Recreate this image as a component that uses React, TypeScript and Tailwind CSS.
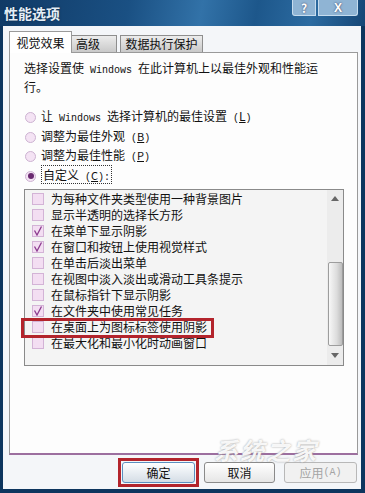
import React from 'react';

const CJK = '"Noto Sans CJK SC", "Liberation Sans", sans-serif';

// half-width latin, like the old bitmap system font
const L: React.FC<{ children: React.ReactNode }> = ({ children }) => (
  <span className="font-['Liberation_Mono',monospace] text-[10px] whitespace-pre">{children}</span>
);

interface RowProps {
  label: string;
  checked?: boolean;
}

const CheckRow: React.FC<RowProps> = ({ label, checked }) => (
  <div className="h-[16px] flex items-center pl-[7px] gap-[7px]">
    <span className="w-[12px] h-[12px] border border-[#d3b3d6] bg-[#f3def2] flex items-center justify-center shrink-0">
      {checked && (
        <svg width="10" height="10" viewBox="0 0 10 10">
          <path d="M1.5 4.5 L4 9 L8.5 0.5" fill="none" stroke="#8c3b8f" strokeWidth="1.3" />
        </svg>
      )}
    </span>
    <span className="text-[12px] leading-[16px] text-[#111]">{label}</span>
  </div>
);

const Radio: React.FC<{ label: React.ReactNode; selected?: boolean }> = ({ label, selected }) => (
  <div className="h-[19.5px] flex items-center pl-[16px] gap-[5px]">
    <span className="w-[11px] h-[11px] rounded-full border border-[#cdb3d2] bg-[#f4e3f4] flex items-center justify-center shrink-0">
      {selected && <span className="w-[6px] h-[6px] rounded-full bg-[#6a2a70]" />}
    </span>
    <span className="text-[12px] leading-[16px] text-[#111] whitespace-nowrap">{label}</span>
  </div>
);

const rows: RowProps[] = [
  { label: '为每种文件夹类型使用一种背景图片' },
  { label: '显示半透明的选择长方形' },
  { label: '在菜单下显示阴影', checked: true },
  { label: '在窗口和按钮上使用视觉样式', checked: true },
  { label: '在单击后淡出菜单' },
  { label: '在视图中淡入淡出或滑动工具条提示' },
  { label: '在鼠标指针下显示阴影' },
  { label: '在文件夹中使用常见任务', checked: true },
  { label: '在桌面上为图标标签使用阴影' },
  { label: '在最大化和最小化时动画窗口' },
];

export default function App() {
  return (
    <div
      className="w-[365px] h-[493px] bg-[#0d355e] flex flex-col overflow-hidden relative"
      style={{ fontFamily: CJK }}
    >
      {/* Title bar */}
      <div className="h-[26px] shrink-0 flex items-start justify-between bg-[linear-gradient(100deg,#103a66_0%,#1a5083_35%,#3272a8_55%,#1d578b_70%,#2c6ba1_85%,#154676_100%)]">
        <span className="mt-[5px] ml-[4px] text-[14px] leading-[16px] font-bold text-[#e4eef7] [text-shadow:0_0_2px_#0a2540]">性能选项</span>
        <div className="flex mr-[7px] gap-[2px]">
          <div className="w-[24px] h-[16px] bg-[#8fb4d4] border border-[#c6dcee] border-t-0 rounded-bl-[3px] flex items-center justify-center text-white text-[12px] font-bold leading-[14px] [text-shadow:0_0_2px_#335]">?</div>
          <div className="w-[40px] h-[16px] bg-[#8fb4d4] border border-[#c6dcee] border-t-0 rounded-br-[3px] flex items-center justify-center text-white text-[12px] font-bold leading-[14px] font-['Liberation_Sans',sans-serif] [text-shadow:0_0_2px_#335]">X</div>
        </div>
      </div>

      {/* Window body */}
      <div className="flex-1 ml-[3px] mr-[4px] mb-[4px] bg-[#f4f6f9] flex flex-col pl-[6px] pr-[3px]">
        {/* Tabs */}
        <div className="flex items-end h-[26px] pt-[6px] relative z-10">
          <div className="w-[63px] h-[22px] bg-white border border-[#9a9a9a] border-b-0 flex items-center justify-center text-[12px] text-[#111] mb-[-1px]">视觉效果</div>
          <div className="w-[45px] h-[17px] bg-[linear-gradient(#ececec,#c9c9c9)] border border-[#8e8e8e] border-b-0 border-l-0 flex items-center pl-[4px] text-[12px] text-[#111]">高级</div>
          <div className="w-[83px] h-[17px] ml-[3px] bg-[linear-gradient(#ececec,#c9c9c9)] border border-[#8e8e8e] border-b-0 flex items-center justify-center text-[12px] text-[#111]">数据执行保护</div>
        </div>

        {/* Panel */}
        <div className="h-[403px] bg-[#fdfdfd] border border-[#9a9a9a] border-b-[#9c6f9f] border-b-2 pl-[14px] pr-[14px] pt-[7px] flex flex-col">
          <p className="text-[12px] leading-[16px] text-[#111] whitespace-nowrap">
            选择设置使<L> Windows </L>在此计算机上以最佳外观和性能运
            <br />
            行。
          </p>

          <div className="mt-[13px] -ml-[15px]">
            <Radio label={<>让<L> Windows </L>选择计算机的最佳设置<L> (</L><span className="underline">L</span><L>)</L></>} />
            <Radio label={<>调整为最佳外观<L> (</L><span className="underline text-[11px]">B</span><L>)</L></>} />
            <Radio label={<>调整为最佳性能<L> (</L><span className="underline text-[11px]">P</span><L>)</L></>} />
            <Radio
              label={<span className="border border-dotted border-[#333] px-[1px]">自定义<L> (</L><span className="underline text-[11px]">C</span><L>):</L></span>}
              selected
            />
          </div>

          {/* List box */}
          <div className="mt-[3px] h-[177px] w-[320px] border border-[#8a8a8a] bg-[#f4f4f4] relative flex">
            <div className="flex-1 pt-[1px]">
              {rows.map((r) => (
                <CheckRow key={r.label} label={r.label} checked={r.checked} />
              ))}
            </div>
            {/* Scrollbar */}
            <div className="w-[16px] bg-[#ececec] flex flex-col items-center">
              <div className="h-[17px] flex items-center justify-center">
                <svg width="8" height="5" viewBox="0 0 8 5"><path d="M0 5 L4 0 L8 5 Z" fill="#666" /></svg>
              </div>
              <div className="mt-[55px] w-[15px] h-[84px] border border-[#9d9d9d] rounded-[2px] bg-[linear-gradient(90deg,#f7f7f7,#dcdcdc_60%,#bdbdbd)]" />
              <div className="flex-1 flex items-center justify-center">
                <svg width="8" height="5" viewBox="0 0 8 5"><path d="M0 0 L8 0 L4 5 Z" fill="#666" /></svg>
              </div>
            </div>
            {/* Highlight */}
            <div className="absolute left-[-4px] top-[128px] w-[193px] h-[20px] border-[3px] border-[#b3242c]" />
          </div>
        </div>

        {/* Buttons */}
        <div className="flex justify-end gap-[9px] mt-[7px] pr-[1px] relative">
          <div className="relative">
            <div className="w-[73px] h-[21px] border border-[#5b8fbf] rounded-[3px] bg-[linear-gradient(#ffffff,#e9eef3_50%,#d5dde5)] flex items-center justify-center text-[12px] text-[#111]">确定</div>
            <div className="absolute -left-[4px] -top-[4px] w-[81px] h-[29px] border-[3px] border-[#b3242c]" />
          </div>
          <div className="w-[71px] h-[21px] border border-[#8a8a8a] rounded-[3px] bg-[linear-gradient(#ffffff,#e6e6e6)] flex items-center justify-center text-[12px] text-[#111]">取消</div>
          <div className="w-[73px] h-[21px] border border-[#b8b8b8] rounded-[3px] bg-[#f1f1f1] flex items-center justify-center text-[12px] text-[#a4a4a4]">应用<L>(A)</L></div>
        </div>
      </div>

      {/* Watermark */}
      <div className="absolute left-[214px] top-[438px] text-[24px] font-bold italic text-white/90 leading-none tracking-[2px] [text-shadow:0_0_2px_#999]">系统之家</div>
    </div>
  );
}
